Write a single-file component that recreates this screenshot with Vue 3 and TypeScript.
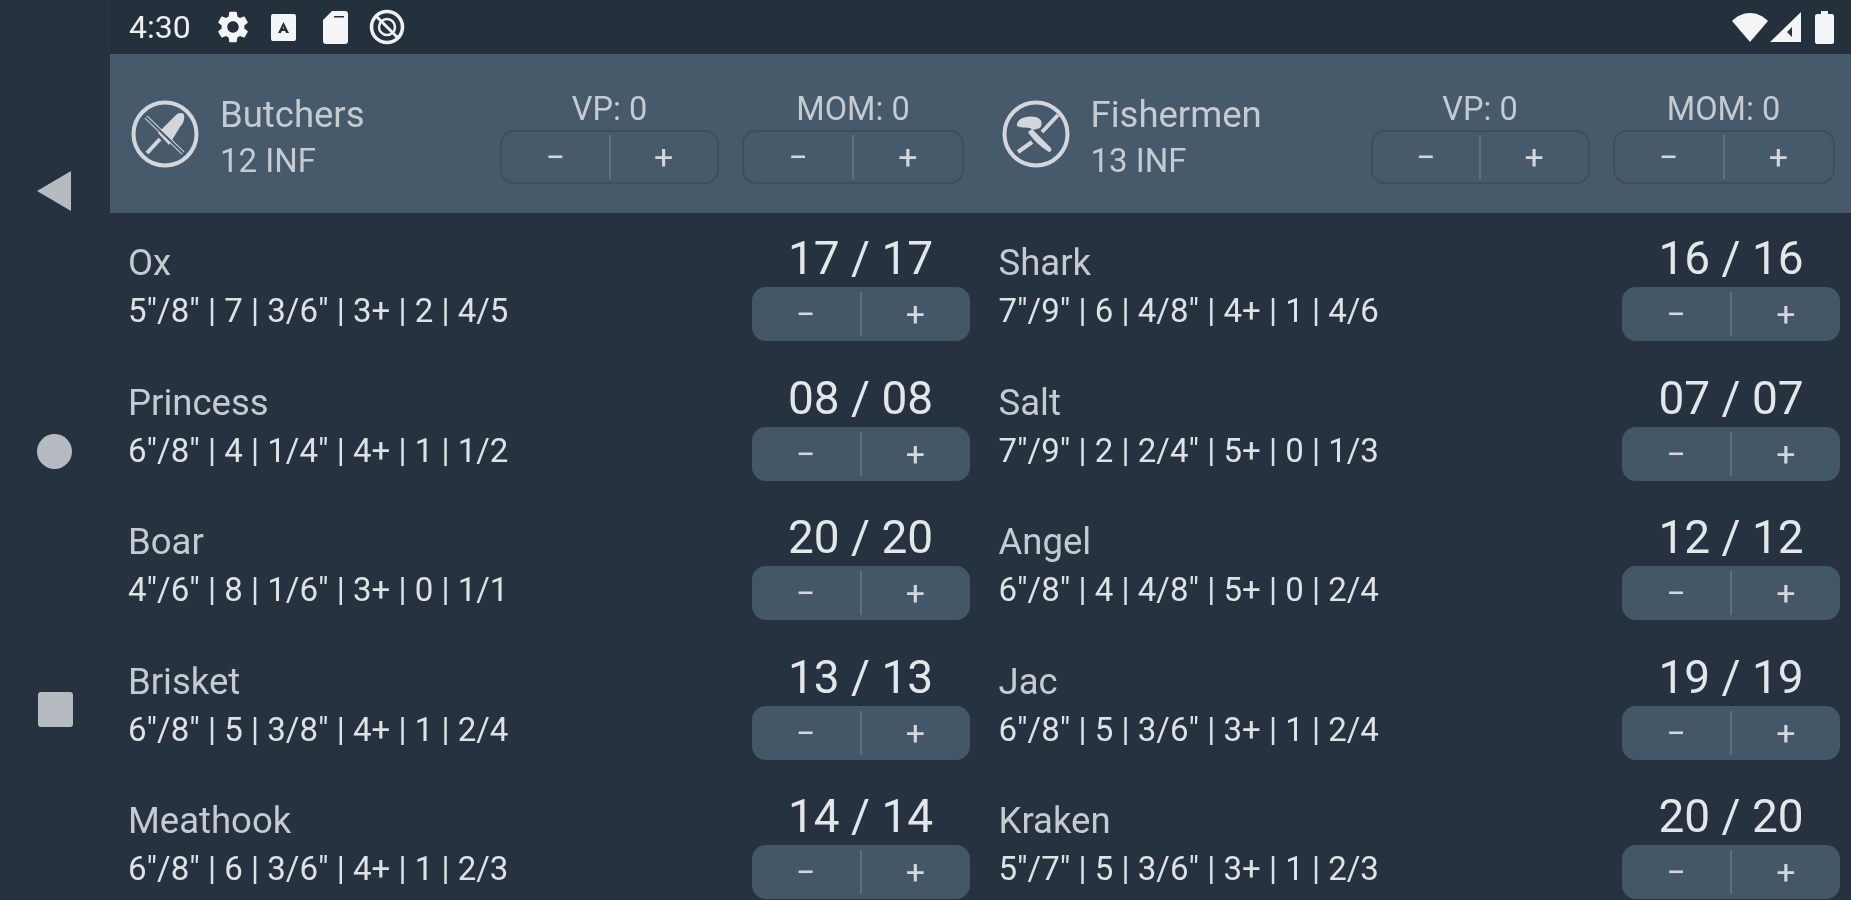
<template>
  <div class="screen">
    <nav class="rail">
      <svg class="nav-icon" viewBox="0 0 34 40"><path d="M34 0v40L0 20z" /></svg>
      <span class="nav-circle"></span>
      <span class="nav-square"></span>
    </nav>

    <div class="main">
      <header class="status-bar">
        <span class="clock">4:30</span>
        <svg class="st-gear" viewBox="0 0 24 24">
          <path d="M19.14 12.94c.04-.3.06-.61.06-.94 0-.32-.02-.64-.07-.94l2.03-1.58c.18-.14.23-.41.12-.61l-1.92-3.32c-.12-.22-.37-.29-.59-.22l-2.39.96c-.5-.38-1.03-.7-1.62-.94l-.36-2.54c-.04-.24-.24-.41-.48-.41h-3.84c-.24 0-.43.17-.47.41l-.36 2.54c-.59.24-1.13.57-1.62.94l-2.39-.96c-.22-.08-.47 0-.59.22L2.74 8.87c-.12.21-.08.47.12.61l2.03 1.58c-.05.3-.09.63-.09.94s.02.64.07.94l-2.03 1.58c-.18.14-.23.41-.12.61l1.92 3.32c.12.22.37.29.59.22l2.39-.96c.5.38 1.03.7 1.62.94l.36 2.54c.05.24.24.41.48.41h3.84c.24 0 .44-.17.47-.41l.36-2.54c.59-.24 1.13-.56 1.62-.94l2.39.96c.22.08.47 0 .59-.22l1.92-3.32c.12-.22.07-.47-.12-.61l-2.01-1.58zM12 15.6c-1.98 0-3.6-1.62-3.6-3.6s1.62-3.6 3.6-3.6 3.6 1.62 3.6 3.6-1.62 3.6-3.6 3.6z" />
        </svg>
        <svg class="st-a" viewBox="0 0 25 27">
          <path fill-rule="evenodd" d="M2 0h21a2 2 0 0 1 2 2v23a2 2 0 0 1-2 2H2a2 2 0 0 1-2-2V2a2 2 0 0 1 2-2zM12.5 8 7 19h3l.8-2h3.4l.8 2h3zM11.8 14.5l.7-2 .7 2z" />
        </svg>
        <svg class="st-sd" viewBox="0 0 25 33">
          <path fill-rule="evenodd" d="M9 0h13a3 3 0 0 1 3 3v27a3 3 0 0 1-3 3H3a3 3 0 0 1-3-3V9zM11 5v1.600h10V5z" />
        </svg>
        <svg class="st-sync" viewBox="0 0 36 36" fill="none" stroke="#eef0f2">
          <circle cx="18" cy="18" r="15.500" stroke-width="3.500" />
          <circle cx="18" cy="18" r="8" stroke-width="2.500" />
          <path d="M7 7l22 22" stroke-width="3" />
        </svg>
        <span class="st-spacer"></span>
        <svg class="st-wifi" viewBox="0 0 36 29"><path d="M18 29 0 8C5 3 11 0 18 0s13 3 18 8z" /></svg>
        <svg class="st-signal" viewBox="0 0 31 30">
          <path fill-rule="evenodd" d="M31 0v30H0zM22 15l-5 5 5 5z" />
        </svg>
        <svg class="st-battery" viewBox="0 0 19 33">
          <path d="M6 0h7v3h4a2 2 0 0 1 2 2v26a2 2 0 0 1-2 2H2a2 2 0 0 1-2-2V5a2 2 0 0 1 2-2h4z" />
        </svg>
      </header>

      <section class="teams-bar">
        <div v-for="team in teams" :key="team.name" class="team-head">
          <svg v-if="team.name === 'Butchers'" class="crest" viewBox="0 0 68 68">
            <circle cx="34" cy="34" r="31.500" class="crest-ring" />
            <path d="M15 17l37 36" class="crest-line" />
            <path d="M16 53l13-14" class="crest-line" />
            <path d="M27 33 45 15c2-2 7-3 8 0 1 4-1 9-4 12L38 45z" class="crest-fill" />
            <path d="M15 17l37 36" class="crest-gap" />
          </svg>
          <svg v-else class="crest" viewBox="0 0 68 68">
            <circle cx="34" cy="34" r="31.500" class="crest-ring" />
            <path d="M16 52l14-10M40 32l16-17" class="crest-line" />
            <path d="M15 26c-1-7 9-11 19-9 6 2 7 7 4 11l-7 2c-4-4-11-1-16-4z" class="crest-fill" />
            <path d="M30 29l19 19c1 2 0 4-2 4-8-5-16-12-21-20z" class="crest-fill" />
          </svg>
          <div class="team-info">
            <div class="team-name">{{ team.name }}</div>
            <div class="team-inf">{{ team.inf }} INF</div>
          </div>
          <div v-for="counter in counters" :key="counter" class="counter">
            <div class="counter-label">{{ counter }}: 0</div>
            <div class="stepper stepper-outline">
              <span class="step-btn">−</span>
              <span class="step-btn">+</span>
            </div>
          </div>
        </div>
      </section>

      <section class="roster">
        <div v-for="team in teams" :key="team.name" class="team-col">
          <div v-for="unit in team.units" :key="unit.name" class="unit-row">
            <div class="unit-info">
              <div class="unit-name">{{ unit.name }}</div>
              <div class="unit-stats">{{ unit.stats }}</div>
            </div>
            <div class="unit-wounds">
              <div class="wound-count">{{ unit.wounds }} / {{ unit.wounds }}</div>
              <div class="stepper">
                <span class="step-btn">−</span>
                <span class="step-btn">+</span>
              </div>
            </div>
          </div>
        </div>
      </section>
    </div>
  </div>
</template>

<script setup lang="ts">
interface Unit {
  name: string
  stats: string
  wounds: string
}

interface Team {
  name: string
  inf: number
  units: Unit[]
}

const counters = ['VP', 'MOM']

const teams: Team[] = [
  {
    name: 'Butchers',
    inf: 12,
    units: [
      { name: 'Ox', stats: '5"/8" | 7 | 3/6" | 3+ | 2 | 4/5', wounds: '17' },
      { name: 'Princess', stats: '6"/8" | 4 | 1/4" | 4+ | 1 | 1/2', wounds: '08' },
      { name: 'Boar', stats: '4"/6" | 8 | 1/6" | 3+ | 0 | 1/1', wounds: '20' },
      { name: 'Brisket', stats: '6"/8" | 5 | 3/8" | 4+ | 1 | 2/4', wounds: '13' },
      { name: 'Meathook', stats: '6"/8" | 6 | 3/6" | 4+ | 1 | 2/3', wounds: '14' },
    ],
  },
  {
    name: 'Fishermen',
    inf: 13,
    units: [
      { name: 'Shark', stats: '7"/9" | 6 | 4/8" | 4+ | 1 | 4/6', wounds: '16' },
      { name: 'Salt', stats: '7"/9" | 2 | 2/4" | 5+ | 0 | 1/3', wounds: '07' },
      { name: 'Angel', stats: '6"/8" | 4 | 4/8" | 5+ | 0 | 2/4', wounds: '12' },
      { name: 'Jac', stats: '6"/8" | 5 | 3/6" | 3+ | 1 | 2/4', wounds: '19' },
      { name: 'Kraken', stats: '5"/7" | 5 | 3/6" | 3+ | 1 | 2/3', wounds: '20' },
    ],
  },
]
</script>

<style scoped>
.screen {
  display: flex;
  height: 900px;
  overflow: hidden;
  background: #26323f;
  color: #d3d7db;
  font-family: Roboto, "Liberation Sans", sans-serif;
  filter: blur(0.6px);
}

.rail {
  flex: 0 0 110px;
  display: flex;
  flex-direction: column;
  align-items: center;
  justify-content: center;
  gap: 223px;
  padding-bottom: 3px;
  box-sizing: border-box;
}

.nav-icon {
  width: 34px;
  height: 40px;
  fill: #b5bbc1;
  margin-left: -3px;
}

.nav-circle {
  width: 35px;
  height: 35px;
  border-radius: 50%;
  background: #b5bbc1;
  margin-left: -2px;
}

.nav-square {
  width: 35px;
  height: 35px;
  border-radius: 3px;
  background: #b5bbc1;
}

.main {
  flex: 1;
  min-width: 0;
}

.status-bar {
  height: 54px;
  display: flex;
  align-items: center;
  padding: 0 17px 0 19px;
  background: #25303d;
  color: #eef0f2;
  fill: #f4f5f6;
}

.clock {
  width: 63px;
  font-size: 32px;
}

.st-gear {
  width: 38px;
  height: 38px;
  margin-left: 22px;
}

.st-a {
  width: 25px;
  height: 27px;
  margin-left: 19px;
}

.st-sd {
  width: 25px;
  height: 33px;
  margin-left: 27px;
}

.st-sync {
  width: 36px;
  height: 36px;
  margin-left: 21px;
}

.st-spacer {
  flex: 1;
}

.st-wifi {
  width: 36px;
  height: 29px;
}

.st-signal {
  width: 31px;
  height: 30px;
  margin-left: 2px;
}

.st-battery {
  width: 19px;
  height: 33px;
  margin-left: 14px;
}

.teams-bar {
  height: 159px;
  display: grid;
  grid-template-columns: minmax(0, 1fr) minmax(0, 1fr);
  background: #465a6c;
}

.team-head {
  display: flex;
  align-items: center;
  padding-left: 21px;
}

.crest {
  width: 68px;
  height: 68px;
  flex: none;
}

.crest-ring,
.crest-line {
  fill: none;
  stroke: #d3d7db;
  stroke-width: 4;
}

.crest-gap {
  fill: none;
  stroke: #465a6c;
  stroke-width: 2;
}

.crest-fill {
  fill: #d3d7db;
}

.team-info {
  width: 280px;
  margin-left: 21px;
  padding-top: 8px;
}

.team-name {
  font-size: 36.5px;
  line-height: 46px;
  color: #c5cbd0;
}

.team-inf {
  font-size: 33px;
  line-height: 46px;
  color: #c5cbd0;
}

.counter {
  margin-right: 23px;
  text-align: center;
  padding-top: 6px;
}

.counter:last-child {
  margin-right: 0;
}

.counter .stepper {
  width: 219px;
}

.counter:last-child .stepper {
  width: 222px;
}

.counter-label {
  font-size: 32.5px;
  line-height: 38px;
  margin-bottom: 2px;
  color: #c5cbd0;
}

.stepper {
  width: 218px;
  height: 54px;
  display: flex;
  align-items: center;
  border-radius: 14px;
  background: #445769;
}

.stepper-outline {
  background: transparent;
  border: 2px solid #3c4e60;
  box-sizing: border-box;
}

.step-btn {
  flex: 1;
  height: 44px;
  display: flex;
  align-items: center;
  justify-content: center;
  font-size: 34px;
  color: #d3d7db;
}

.step-btn:first-child {
  border-right: 2px solid #5d7083;
}

.roster {
  display: grid;
  grid-template-columns: minmax(0, 1fr) minmax(0, 1fr);
  padding-top: 14px;
}

.team-col {
  padding-left: 18px;
}

.unit-row {
  height: 139.6px;
  display: flex;
  justify-content: space-between;
  padding-right: 11px;
}

.unit-info {
  padding-top: 12px;
}

.unit-name {
  font-size: 36.5px;
  line-height: 48px;
  color: #c5cbd0;
}

.unit-stats {
  font-size: 33px;
  line-height: 48px;
  color: #dfe2e5;
}

.wound-count {
  font-size: 46px;
  line-height: 62px;
  margin-bottom: -2px;
  text-align: center;
  color: #e4e7e9;
}
</style>

<style>
body {
  background: #26323f;
}
</style>
